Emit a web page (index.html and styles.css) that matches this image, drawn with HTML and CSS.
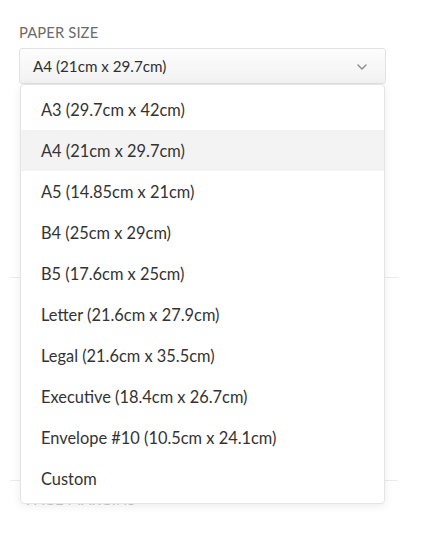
FILE: index.html
```html
<!DOCTYPE html>
<html>
<head>
<meta charset="utf-8">
<link rel="stylesheet" href="styles.css">
</head>
<body>
<div class="panel">
  <div class="section first">
    <div class="label">PAPER SIZE</div>
    <div class="select-wrap">
      <div class="select">
        <span class="value">A4 (21cm x 29.7cm)</span>
        <svg class="chev" width="10" height="6" viewBox="0 0 10 6"><path d="M1 1 L5 5 L9 1" fill="none" stroke="#8a8a8a" stroke-width="1.4" stroke-linecap="round" stroke-linejoin="round"/></svg>
      </div>
      <ul class="menu">
        <li class="item">A3 (29.7cm x 42cm)</li>
        <li class="item active">A4 (21cm x 29.7cm)</li>
        <li class="item">A5 (14.85cm x 21cm)</li>
        <li class="item">B4 (25cm x 29cm)</li>
        <li class="item">B5 (17.6cm x 25cm)</li>
        <li class="item">Letter (21.6cm x 27.9cm)</li>
        <li class="item">Legal (21.6cm x 35.5cm)</li>
        <li class="item">Executive (18.4cm x 26.7cm)</li>
        <li class="item">Envelope #10 (10.5cm x 24.1cm)</li>
        <li class="item">Custom</li>
      </ul>
    </div>
  </div>
  <div class="section second"></div>
  <div class="section third">
    <div class="label ghost">PAGE MARGINS</div>
  </div>
</div>
</body>
</html>
```
FILE: styles.css
```css
* { box-sizing: border-box; }
html, body { margin: 0; padding: 0; background: #fff; }
body {
  font-family: Lato, "Open Sans", "Liberation Sans", sans-serif;
  color: #333;
  width: 422px;
  height: 534px;
  overflow: hidden;
}
.panel {
  width: 388px;
  margin-left: 10px;
}
.section {
  padding: 0 12px 0 9px;
  border-bottom: 1px solid #ebebeb;
}
.section.first {
  padding-top: 23px;
  height: 278px;
}
.section.second {
  height: 203px;
}
.section.third {
  border-bottom: none;
  padding-top: 9px;
}
.label {
  font-size: 14.8px;
  line-height: 18px;
  color: #6b6b6b;
  letter-spacing: 0.1px;
  margin-bottom: 7px;
}
.label.ghost {
  color: #c8c8c8;
  padding-left: 7px;
}
.select-wrap {
  position: relative;
}
.select {
  height: 36px;
  border: 1px solid #e2e2e2;
  border-radius: 3px;
  background: linear-gradient(#fdfdfd, #f2f2f2);
  display: flex;
  align-items: center;
  justify-content: space-between;
  padding: 0 18px 0 13px;
  font-size: 15.2px;
  color: #2f2f2f;
}
.chev { display: block; margin-top: 1px; }
.menu {
  position: absolute;
  top: 36px;
  left: 1px;
  right: 1px;
  z-index: 2;
  margin: 0;
  padding: 4px 0;
  list-style: none;
  background: #fff;
  border: 1px solid #e4e4e4;
  border-radius: 4px;
  box-shadow: 0 2px 8px rgba(0,0,0,0.08);
}
.item {
  height: 41px;
  display: flex;
  align-items: center;
  padding-left: 20px;
  font-size: 16.4px;
  color: #333;
}
.item.active {
  background: #f3f3f3;
}
```
